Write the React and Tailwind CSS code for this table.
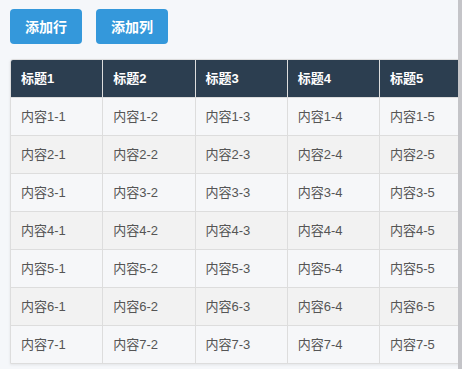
import React from "react";

const cols = [1, 2, 3, 4, 5];
const rows = [1, 2, 3, 4, 5, 6, 7];

export default function App() {
  return (
    <div
      className="flex w-[462px] h-[369px] overflow-hidden bg-[#f5f7fa]"
      style={{ fontFamily: '"Liberation Sans", "Noto Sans CJK SC", sans-serif' }}
    >
      <div className="flex-1 min-w-0 overflow-hidden pl-[10px] pt-[9px]">
        <div className="flex gap-[14px]">
          <button className="h-[35px] px-[15px] rounded-[4px] bg-[#3498db] text-white text-[14px] font-semibold leading-none">
            添加行
          </button>
          <button className="h-[35px] px-[15px] rounded-[4px] bg-[#3498db] text-white text-[14px] font-semibold leading-none">
            添加列
          </button>
        </div>
        <div className="mt-[15px] w-[472px] border border-[#dddddd] rounded-tl-[3px] overflow-hidden shadow-[0_1px_3px_rgba(0,0,0,0.08)]">
          <div className="flex bg-[#2c3e50] h-[37px]">
            {cols.map((c, i) => (
              <div
                key={c}
                className={`w-[92.25px] shrink-0 flex items-center pl-[10px] text-white font-bold text-[13px] ${i < 4 ? "border-r border-[#dddddd]" : ""}`}
              >
                标题{c}
              </div>
            ))}
          </div>
          {rows.map((r) => (
            <div
              key={r}
              className={`flex h-[38px] border-t border-[#dddddd] ${r % 2 === 0 ? "bg-[#f2f2f2]" : "bg-[#f6f7f9]"}`}
            >
              {cols.map((c, i) => (
                <div
                  key={c}
                  className={`w-[92.25px] shrink-0 flex items-center pl-[10px] text-[#555555] text-[13px] ${i < 4 ? "border-r border-[#dddddd]" : ""}`}
                >
                  内容{r}-{c}
                </div>
              ))}
            </div>
          ))}
        </div>
      </div>
      <div className="w-[4px] shrink-0 bg-[#c4c4c8]" />
    </div>
  );
}
